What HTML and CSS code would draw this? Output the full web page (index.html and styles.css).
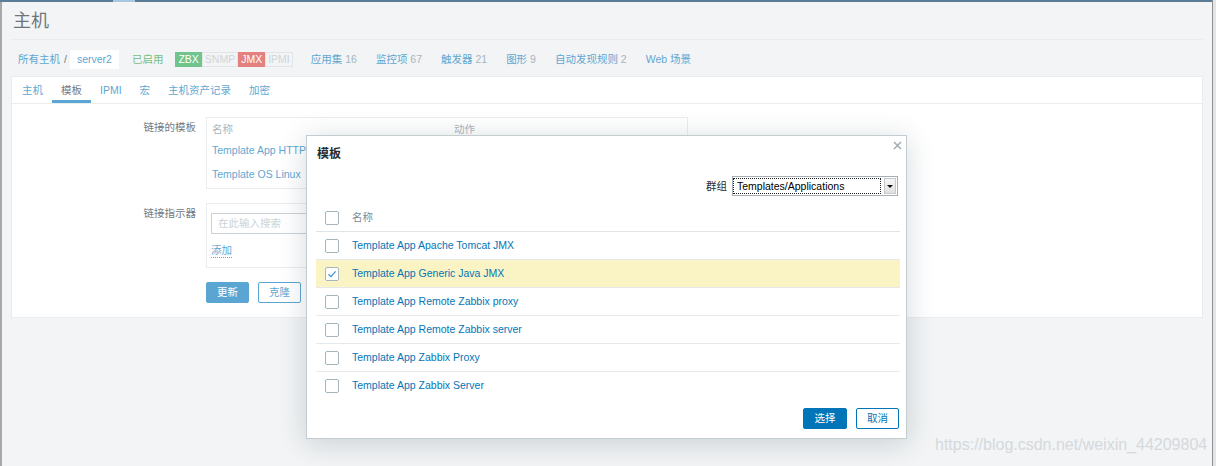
FILE: index.html
```html
<!DOCTYPE html>
<html lang="zh-CN">
<head>
<meta charset="utf-8">
<title>主机</title>
<link rel="stylesheet" href="styles.css">
</head>
<body>
<div class="window">
  <div class="topbar"><span class="topbar-active"></span></div>
  <div class="frame">
    <div class="page">
      <header class="page-header"><h1 class="title">主机</h1></header>
      <nav class="host-nav">
        <a class="crumb">所有主机</a><span class="crumb-sep">/</span><span class="crumb-current">server2</span>
        <span class="status-on">已启用</span>
        <span class="badges"><span class="badge badge-zbx">ZBX</span><span class="badge badge-off">SNMP</span><span class="badge badge-jmx">JMX</span><span class="badge badge-off">IPMI</span></span>
        <a class="nav-link nav-first">应用集 <span class="count">16</span></a>
        <a class="nav-link">监控项 <span class="count">67</span></a>
        <a class="nav-link">触发器 <span class="count">21</span></a>
        <a class="nav-link">图形 <span class="count">9</span></a>
        <a class="nav-link">自动发现规则 <span class="count">2</span></a>
        <a class="nav-link">Web 场景</a>
      </nav>
      <section class="card">
        <ul class="tabs">
          <li class="tab">主机</li>
          <li class="tab tab-active">模板</li>
          <li class="tab">IPMI</li>
          <li class="tab">宏</li>
          <li class="tab">主机资产记录</li>
          <li class="tab">加密</li>
        </ul>
        <div class="form">
          <div class="form-label">链接的模板</div>
          <div class="form-field">
            <div class="linked">
              <div class="linked-row linked-head"><span>名称</span><span>动作</span></div>
              <div class="linked-row"><a class="link">Template App HTTP Service</a><span></span></div>
              <div class="linked-row"><a class="link">Template OS Linux</a><span></span></div>
            </div>
          </div>
          <div class="form-label">链接指示器</div>
          <div class="form-field">
            <div class="indicator">
              <div class="search-input">在此输入搜索</div>
              <div class="add-row"><a class="add-link">添加</a></div>
            </div>
          </div>
          <div class="form-label"></div>
          <div class="form-field buttons">
            <span class="btn btn-primary">更新</span>
            <span class="btn btn-alt">克隆</span>
          </div>
        </div>
      </section>
      <div class="overlay-bg"></div>
    </div>
  </div>
</div>
<div class="scroll-edge"></div>

<div class="dialog">
  <div class="dialog-head">
    <h4 class="dialog-title">模板</h4>
    <span class="dialog-close"><svg width="9" height="9" viewBox="0 0 9 9"><path d="M1 1 L8 8 M8 1 L1 8" stroke="#a3aeb4" stroke-width="1.6" fill="none"/></svg></span>
  </div>
  <div class="dialog-body">
    <div class="group-row">
      <span class="group-label">群组</span>
      <div class="select"><span class="select-value">Templates/Applications</span><span class="select-arrow"><span class="caret"></span></span></div>
    </div>
    <div class="tpl-table">
      <div class="tpl-row tpl-head"><span class="cb"></span><span class="tpl-head-text">名称</span></div>
      <div class="tpl-row"><span class="cb"></span><a class="tpl-link">Template App Apache Tomcat JMX</a></div>
      <div class="tpl-row tpl-selected"><span class="cb"><svg width="12" height="12" viewBox="0 0 12 12"><path d="M2.5 6.2 L5 8.6 L9.6 3.4" stroke="#3f8fcf" stroke-width="1.2" fill="none"/></svg></span><a class="tpl-link">Template App Generic Java JMX</a></div>
      <div class="tpl-row"><span class="cb"></span><a class="tpl-link">Template App Remote Zabbix proxy</a></div>
      <div class="tpl-row"><span class="cb"></span><a class="tpl-link">Template App Remote Zabbix server</a></div>
      <div class="tpl-row"><span class="cb"></span><a class="tpl-link">Template App Zabbix Proxy</a></div>
      <div class="tpl-row"><span class="cb"></span><a class="tpl-link">Template App Zabbix Server</a></div>
    </div>
  </div>
  <div class="dialog-foot">
    <span class="dbtn dbtn-primary">选择</span>
    <span class="dbtn dbtn-alt">取消</span>
  </div>
</div>

<div class="watermark">https://blog.csdn.net/weixin_44209804</div>
</body>
</html>
```

FILE: styles.css
```css
* { box-sizing: border-box; }
html, body { margin: 0; padding: 0; }
body {
  width: 1216px;
  height: 466px;
  overflow: hidden;
  display: flex;
  position: relative;
  font-family: "Liberation Sans", Arial, "Noto Sans CJK SC", sans-serif;
  font-size: 10.5px;
  line-height: 13px;
  color: #1f2c33;
  background: #f2f4f5;
}
a { text-decoration: none; }

.window { flex: 1; display: flex; flex-direction: column; }
.topbar { height: 2px; background: #5b7c96; padding-left: 113px; }
.topbar-active { display: block; width: 22px; height: 2px; background: #a8c7e1; }
.frame { flex: 1; display: flex; border-left: 2px solid #a5a7a9; }
.page { flex: 1; position: relative; background: #ebeef0; padding: 0 9px; }
.overlay-bg { position: absolute; inset: 0; background: rgba(255, 255, 255, 0.35); }
.scroll-edge { width: 4px; border-left: 1px solid #8e9092; background: #e3e4e5; }

/* header */
.page-header { height: 38px; padding: 2px 0 0 2px; border-bottom: 1px solid #dfe4e7; }
.title { margin: 0; font-size: 18px; font-weight: normal; line-height: 35px; color: #1f2c33; }

/* host nav */
.host-nav { display: flex; align-items: center; height: 19px; margin: 10px 0 7px; }
.crumb { margin-left: 7px; color: #0275b8; }
.crumb-sep { margin: 0 3px 0 4px; color: #1f2c33; }
.crumb-current { background: #fff; color: #0275b8; padding: 0 7px; line-height: 19px; }
.status-on { margin-left: 13px; color: #2f9a3c; }
.badges { display: flex; margin-left: 12px; }
.badge { padding: 0 2px; border: 1px solid; line-height: 13px; }
.badge-zbx { background: #26a54d; border-color: #26a54d; color: #fff; }
.badge-jmx { background: #d63c3a; border-color: #d63c3a; color: #fff; }
.badge-off { background: #ebeef0; border-color: #d2d8dc; color: #b5bfc4; }
.nav-link { margin-left: 19px; color: #0275b8; }
.nav-first { margin-left: 18px; }
.count { color: #768d99; }

/* card */
.card { background: #fff; border: 1px solid #dfe4e7; }
.tabs { display: flex; margin: 0; padding: 0; list-style: none; height: 27px; border-bottom: 1px solid #dfe4e7; }
.tab { padding: 0 9px; line-height: 26px; color: #0275b8; }
.tab:first-child { padding-left: 10px; }
.tab-active { color: #1f2c33; box-shadow: inset 0 -3px 0 #0275b8; }

.form { display: grid; grid-template-columns: 184px 1fr; column-gap: 10px; row-gap: 14px; padding: 13px 0 14px; }
.form-label { text-align: right; padding-top: 4px; color: #1f2c33; }

.linked { width: 482px; border: 1px solid #dfe4e7; padding: 0 5px; }
.linked-row { display: grid; grid-template-columns: 242px 1fr; padding: 4px 0 7px; }
.linked-head { padding: 5px 0 4px; color: #768d99; }
.link { color: #0275b8; white-space: nowrap; }

.indicator { width: 455px; border: 1px solid #dfe4e7; padding: 9px 4px; }
.search-input { width: 440px; height: 21px; border: 1px solid #acbbc2; padding-left: 6px; line-height: 19px; color: #acbbc2; }
.add-row { margin-top: 10px; }
.add-link { display: inline-block; color: #0275b8; border-bottom: 1px dotted #0275b8; }

.buttons { display: flex; gap: 9px; }
.btn { height: 21px; padding: 0 10px; border: 1px solid #0275b8; line-height: 19px; border-radius: 2px; }
.btn-primary { background: #0275b8; color: #fff; }
.btn-alt { background: #fff; color: #0275b8; }

/* dialog */
.dialog {
  position: absolute;
  left: 306px;
  top: 135px;
  width: 601px;
  background: #fff;
  border: 1px solid #c3ccd1;
  box-shadow: 0 4px 26px rgba(40, 60, 75, 0.2);
  z-index: 2;
}
.dialog-head { padding: 10px 10px 0; }
.dialog-title { margin: 0; font-size: 12px; font-weight: bold; line-height: 16px; color: #1f2c33; }
.dialog-close { position: absolute; top: 5px; right: 4px; display: block; width: 9px; height: 9px; }
.dialog-close svg { display: block; }

.dialog-body { padding: 14px 6px 0 9px; }
.group-row { display: flex; justify-content: flex-end; align-items: center; padding-right: 2px; }
.group-label { margin-right: 5px; color: #1f2c33; }
.select { display: flex; width: 166px; height: 20px; border: 1px solid #a7afb4; padding: 1px 1px 1px 0; background: #fff; }
.select-value { flex: 1; border: 1px dotted #222; padding-left: 3px; line-height: 14px; color: #000; }
.select-arrow { width: 12px; margin-left: 3px; border: 1px solid #c6c9cb; background: linear-gradient(#f7f7f7, #e0e0e0); display: flex; align-items: center; justify-content: center; }
.caret { width: 0; height: 0; border-left: 3px solid transparent; border-right: 3px solid transparent; border-top: 3px solid #111; }

.tpl-table { margin-top: 8px; }
.tpl-row { display: flex; align-items: center; height: 28px; border-bottom: 1px solid #e6e9eb; }
.tpl-row:last-child { border-bottom: none; height: 27px; }
.tpl-head { border-bottom-color: #dfe4e7; }
.tpl-selected { background: #faf4c4; }
.cb { width: 14px; height: 14px; margin: 0 13px 0 9px; border: 1px solid #a7b5bd; border-radius: 2px; background: #fff; display: flex; align-items: center; justify-content: center; flex: none; }
.cb svg { display: block; }
.tpl-head-text { color: #768d99; }
.tpl-link { color: #0275b8; }

.dialog-foot { display: flex; justify-content: flex-end; gap: 9px; padding: 9px 7px 9px 0; }
.dbtn { height: 21px; padding: 0 10.5px; border: 1px solid #0275b8; line-height: 19px; border-radius: 2px; }
.dbtn-alt { padding: 0 10px; }
.dbtn-primary { background: #0275b8; color: #fff; }
.dbtn-alt { background: #fff; color: #0275b8; }

.watermark {
  position: absolute;
  left: 935px;
  top: 436px;
  font-family: "Liberation Sans", Arial, sans-serif;
  font-size: 16px;
  line-height: 18px;
  color: #d5d9dc;
  z-index: 3;
  white-space: nowrap;
}
```
